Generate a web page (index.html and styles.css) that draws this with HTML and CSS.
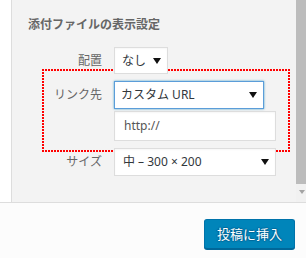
FILE: index.html
```html
<!DOCTYPE html>
<html lang="ja">
<head>
<meta charset="utf-8">
<link rel="stylesheet" href="styles.css">
</head>
<body>
<div class="top">
  <div class="gutter"></div>
  <div class="panel">
    <h2 class="title">添付ファイルの表示設定</h2>
    <div class="row r1">
      <span class="lbl">配置</span>
      <div class="sel sel-s">なし<span class="arr"></span></div>
    </div>
    <div class="row r2">
      <span class="lbl">リンク先</span>
      <div class="sel sel-m focus">カスタム URL<span class="arr"></span></div>
    </div>
    <div class="row r3">
      <span class="lbl"></span>
      <div class="inp">http://</div>
    </div>
    <div class="row r4">
      <span class="lbl">サイズ</span>
      <div class="sel sel-l">中 – 300 × 200<span class="arr"></span></div>
    </div>
    <div class="mark"></div>
  </div>
  <div class="scroll">
    <div class="thumb"></div>
    <div class="sarrow"></div>
  </div>
</div>
<div class="bottom">
  <button class="btn">投稿に挿入</button>
</div>
</body>
</html>
```
FILE: styles.css
```css
* { box-sizing: border-box; }
html, body { margin: 0; padding: 0; }
body {
  width: 306px;
  height: 258px;
  overflow: hidden;
  background: #fcfcfc;
  font-family: "Noto Sans", "Noto Sans CJK JP", sans-serif;
  font-size: 12px;
}
.top {
  display: flex;
  height: 203px;
  border-bottom: 1px solid #dddddd;
}
.gutter {
  width: 12px;
  background: #ffffff;
  border-right: 1px solid #dddddd;
}
.panel {
  position: relative;
  flex: 1;
  background: #f3f3f3;
  padding-top: 16px;
}
.title {
  margin: 0 0 13px 16px;
  font-size: 12px;
  line-height: 18px;
  font-weight: bold;
  color: #666666;
}
.row {
  display: flex;
  align-items: center;
  position: relative;
  z-index: 1;
}
.r2 { margin-top: 7px; }
.r3 { margin-top: 2px; }
.r4 { margin-top: 7px; }
.lbl {
  width: 90px;
  margin-right: 12px;
  text-align: right;
  color: #666666;
  line-height: 18px;
}
.sel, .inp {
  position: relative;
  display: flex;
  align-items: center;
  background: #ffffff;
  border: 1px solid #dddddd;
  box-shadow: inset 0 1px 2px rgba(0,0,0,0.04);
  color: #32373c;
  line-height: 18px;
}
.sel-s { width: 54px; height: 27px; padding-left: 7px; }
.sel-m { width: 150px; height: 28px; padding-left: 6px; }
.sel-l { width: 162px; height: 28px; padding-left: 8px; }
.inp { width: 162px; height: 30px; padding-left: 9px; color: #555555; }
.focus {
  border-color: #5b9dd9;
  box-shadow: 0 0 2px rgba(30,140,190,0.8);
}
.arr {
  position: absolute;
  right: 6px;
  top: 50%;
  margin-top: -3px;
  width: 0;
  height: 0;
  border-left: 4px solid transparent;
  border-right: 4px solid transparent;
  border-top: 6px solid #111111;
}
.sel-s .arr { right: 6px; }
.mark {
  position: absolute;
  left: 30px;
  top: 69px;
  width: 248px;
  height: 83px;
  z-index: 0;
  background:
    repeating-linear-gradient(to right, #ff0000 0 2px, transparent 2px 3px) top left / 100% 2px no-repeat,
    repeating-linear-gradient(to right, #ff0000 0 2px, transparent 2px 3px) bottom left / 100% 2px no-repeat,
    repeating-linear-gradient(to bottom, #ff0000 0 2px, transparent 2px 3px) top left / 2px 100% no-repeat,
    repeating-linear-gradient(to bottom, #ff0000 0 2px, transparent 2px 3px) top right / 2px 100% no-repeat;
}
.scroll {
  width: 10px;
  background: #f1f1f1;
  position: relative;
}
.thumb {
  height: 184px;
  background: #bcbcbc;
}
.sarrow {
  margin: 6px 0 0 3px;
  width: 0;
  height: 0;
  border-left: 3px solid transparent;
  border-right: 3px solid transparent;
  border-top: 4px solid #a3a3a3;
}
.bottom {
  display: flex;
  justify-content: flex-end;
  padding: 16px 11px 0 0;
}
.btn {
  width: 91px;
  height: 30px;
  padding: 0;
  background: #0085ba;
  border: 1px solid #0073aa;
  border-bottom-color: #006799;
  border-radius: 3px;
  box-shadow: 0 1px 0 #006799;
  color: #ffffff;
  font-family: "Noto Sans", "Noto Sans CJK JP", sans-serif;
  font-size: 13px;
  line-height: 28px;
  text-shadow: 0 -1px 1px #006799, 1px 0 1px #006799, 0 1px 1px #006799, -1px 0 1px #006799;
}
```
